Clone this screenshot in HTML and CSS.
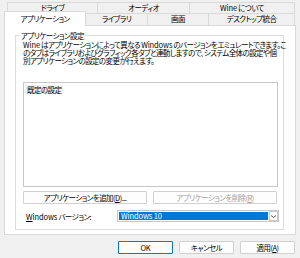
FILE: index.html
```html
<!DOCTYPE html>
<html lang="ja">
<head>
<meta charset="utf-8">
<link rel="stylesheet" href="styles.css">
</head>
<body>
<div class="dialog">
  <div class="tabrow back">
    <div class="tab t-drive">ドライブ</div>
    <div class="tab t-audio">オーディオ</div>
    <div class="tab t-about"><span class="lat">Wine</span> について</div>
  </div>
  <div class="tabrow front">
    <div class="tab t-app selected">アプリケーション</div>
    <div class="tab t-lib">ライブラリ</div>
    <div class="tab t-screen">画面</div>
    <div class="tab t-desk">デスクトップ統合</div>
  </div>
  <div class="panel">
    <fieldset class="group">
      <legend>アプリケーション設定</legend>
      <p class="desc"><span class="lat">Wine</span> はアプリケーションによって異なる <span class="lat">Windows</span> のバージョンをエミュレートできます。こ<br>のタブはライブラリおよびグラフィック各タブと連動しますので、システム全体の設定や個<br>別アプリケーションの設定の変更が行えます。</p>
      <div class="listbox">
        <div class="item">既定の設定</div>
      </div>
      <div class="btnrow">
        <button class="btn">アプリケーションを追加(<u>D</u>)...</button>
        <button class="btn disabled">アプリケーションを削除(<u>R</u>)</button>
      </div>
      <div class="verrow">
        <span class="label"><span class="lat"><u>W</u>indows</span> バージョン:</span>
        <div class="combo">
          <span class="combo-value lat">Windows 10</span>
          <span class="combo-arrow"><svg width="7" height="5" viewBox="0 0 7 5"><path d="M1 1.5 L3.5 3.5 L6 1.5" fill="none" stroke="#555" stroke-width="1"/></svg></span>
        </div>
      </div>
    </fieldset>
  </div>
  <div class="footer">
    <button class="btn fbtn default lat">OK</button>
    <button class="btn fbtn">キャンセル</button>
    <button class="btn fbtn">適用(<u>A</u>)</button>
  </div>
</div>
</body>
</html>
```
FILE: styles.css
```css
* { box-sizing: border-box; }
html, body { margin: 0; padding: 0; }
body {
  width: 300px;
  height: 258px;
  background: #f0f0f0;
  font-family: "Noto Sans CJK JP", "Liberation Sans", sans-serif;
  font-size: 7.5px;
  letter-spacing: -0.55px;
  font-feature-settings: "palt";
  color: #000;
  overflow: hidden;
}
.lat { letter-spacing: -0.1px; }
.dialog { padding: 2px 4px 0 4px; }
.tabrow { display: flex; height: 11px; position: relative; }
.tabrow.back { margin-left: 3px; }
.tabrow.front { height: 12px; }
.tab {
  border: 1px solid #d9d9d9;
  border-bottom: none;
  margin-right: -1px;
  background: #f0f0f0;
  text-align: center;
  line-height: 10px;
  white-space: nowrap;
}
.t-drive { width: 91px; }
.t-audio { width: 93px; }
.t-about { width: 106px; }
.t-app { width: 82px; }
.t-lib { width: 63px; }
.t-screen { width: 62px; }
.t-desk { width: 87px; }
.tab.selected {
  background: #fff;
  height: 15px;
  margin-top: -2px;
  position: relative;
  z-index: 2;
  line-height: 14px;
}
.panel {
  background: #fff;
  border: 1px solid #d9d9d9;
  height: 210px;
  width: 292px;
  padding: 5px 0 0 10px;
}
.group {
  margin: 0;
  width: 269px;
  height: 199px;
  border: 1px solid #dcdcdc;
  padding: 0 0 0 7px;
  min-width: 0;
}
.group legend {
  padding: 0 1px;
  margin-left: -3px;
  line-height: 9px;
}
.desc {
  margin: 1px 0 0 0;
  line-height: 8px;
  letter-spacing: -0.6px;
  white-space: nowrap;
}
.desc .lat { letter-spacing: -0.1px; }
.listbox {
  margin-top: 17px;
  width: 255px;
  height: 105px;
  border: 1px solid #c8c8c8;
  padding: 1px;
}
.item {
  display: inline-block;
  background: #f0f0f0;
  padding: 0 2px;
  line-height: 9px;
}
.btnrow {
  display: flex;
  gap: 6px;
  margin-top: 4px;
}
.btn {
  font: inherit;
  letter-spacing: -0.55px;
  font-feature-settings: "palt";
  background: #fdfdfd;
  border: 1px solid #d0d0d0;
  border-radius: 1px;
  padding: 0;
  height: 13px;
  line-height: 10px;
  color: #000;
}
.btn.lat { letter-spacing: -0.1px; }
.btnrow .btn { width: 124px; }
.btn.disabled { color: #a0a0a0; }
.verrow {
  display: flex;
  align-items: center;
  margin-top: 6px;
}
.label { width: 94px; padding-left: 3px; }
.combo {
  display: flex;
  width: 162px;
  height: 12px;
  border: 1px solid #c8c8c8;
  background: #fff;
  padding: 1px;
}
.combo-value {
  flex: 1;
  background: #0078d7;
  color: #fff;
  line-height: 8px;
  padding-left: 2px;
}
.combo-arrow {
  width: 9px;
  display: flex;
  align-items: center;
  justify-content: center;
  border: 1px solid #c8c8c8;
  margin: -1px -1px -1px 1px;
}
.footer {
  display: flex;
  justify-content: flex-end;
  gap: 6px;
  margin-top: 6px;
  padding-right: 1px;
}
.fbtn { width: 55px; }
.fbtn.default { border-color: #0078d7; }
u { text-decoration: underline; }
```
